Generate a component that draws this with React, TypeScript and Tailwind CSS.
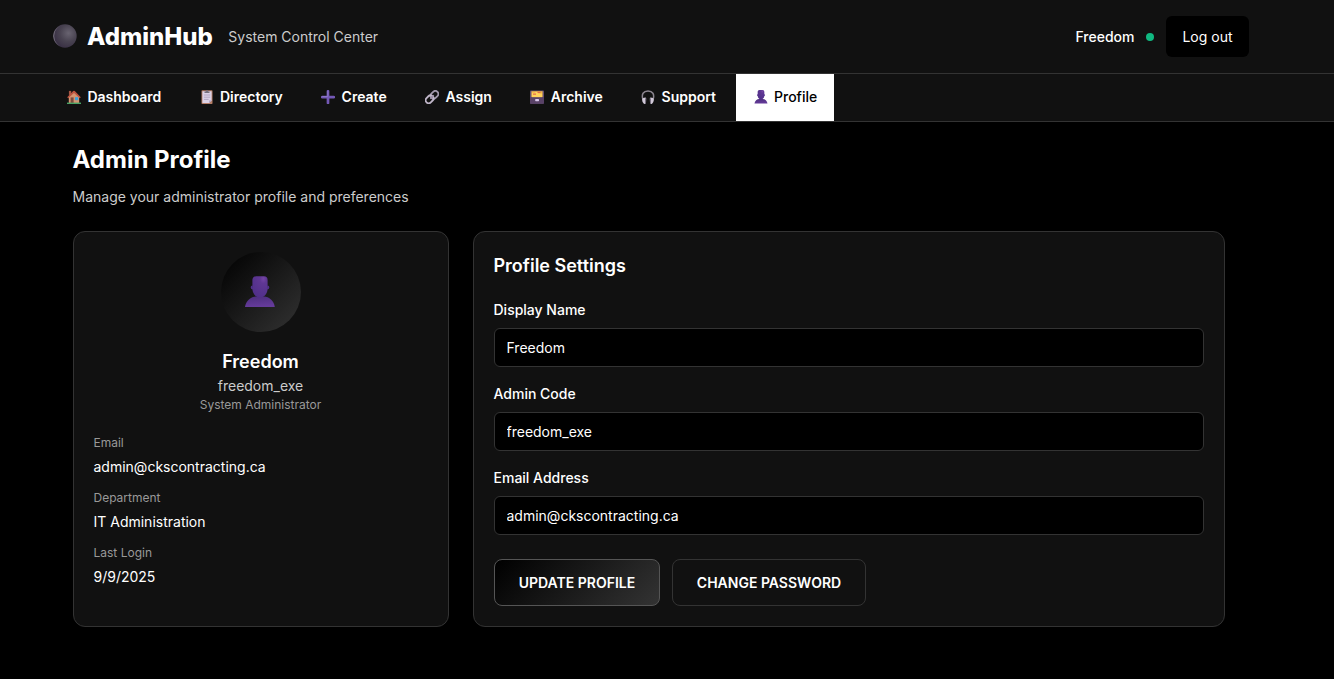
import React from "react";

type IconProps = { className?: string };

const base = "block shrink-0";

function MoonIcon() {
  return (
    <svg viewBox="0 0 24 24" className={`${base} mb-px h-6 w-6`}>
      <defs>
        <radialGradient id="moon" cx="0.65" cy="0.38" r="0.65">
          <stop offset="0" stopColor="#686370" />
          <stop offset="0.55" stopColor="#494351" />
          <stop offset="1" stopColor="#3a3145" />
        </radialGradient>
        <linearGradient id="moonEdge" x1="0" y1="0.3" x2="0.6" y2="0.3">
          <stop offset="0" stopColor="#8a8590" stopOpacity="0.8" />
          <stop offset="0.5" stopColor="#5b5563" stopOpacity="0" />
        </linearGradient>
      </defs>
      <circle cx="12" cy="12" r="11.7" fill="url(#moon)" />
      <circle cx="12" cy="12" r="11.3" fill="none" stroke="url(#moonEdge)" strokeWidth="1" />
    </svg>
  );
}

function HouseIcon({ className = "" }: IconProps) {
  return (
    <svg viewBox="0 0 14 14" className={`${base} ${className}`}>
      <path d="M1.9 0.9h2.3v4H1.9z" fill="#a65643" />
      <path d="M1.8 6.4 7 2l5.2 4.4V13H1.8z" fill="#d59572" />
      <path d="M0.2 7.2 6.2 1.1q.8-.7 1.6 0l6 6.1-1 1L7 2.9 1.2 8.2z" fill="#bd5440" />
      <path d="M3.6 7.4h3V13h-3z" fill="#7c4b3d" />
      <path d="M8 7.2h3.2v3H8z" fill="#3ba1dc" />
      <path d="M0 12.6h14V14H0z" fill="#48a265" />
    </svg>
  );
}

function ClipboardIcon({ className = "" }: IconProps) {
  return (
    <svg viewBox="0 0 14 14" className={`${base} ${className}`}>
      <rect x="1.5" y="0.2" width="11" height="13.8" rx="0.8" fill="#b47c65" />
      <path d="M2.4 1.2h9.2v9.3L9.2 13H2.4z" fill="#dcd2e6" />
      <path d="M11.6 10.5H9.2V13z" fill="#aa9bc0" />
      <path d="M4.5 1.6h1.2Q5.9 0 7 0t1.3 1.6h1.2v1.5h-5z" fill="#77717e" />
      <path d="M3.9 5h6.3M3.9 7.2h6.3M3.9 9.4h4.7" stroke="#a99bb9" strokeWidth="0.8" />
    </svg>
  );
}

function PlusIcon({ className = "" }: IconProps) {
  return (
    <svg viewBox="0 0 14 14" className={`${base} ${className}`}>
      <path d="M7 1.2v11.8M1.1 7.1h11.8" stroke="#7358b5" strokeWidth="2.7" strokeLinecap="round" />
      <path d="M6.8 1v5.5H1.2" fill="none" stroke="#9280cb" strokeWidth="0.7" />
    </svg>
  );
}

function LinkIcon({ className = "" }: IconProps) {
  return (
    <svg viewBox="0 0 14 14" className={`${base} ${className}`}>
      <g fill="none" strokeWidth="1.8">
        <rect x="5.1" y="1.9" width="8.6" height="6" rx="3" transform="rotate(-45 9.4 4.9)" stroke="#a198ab" />
        <rect x="0.3" y="6.3" width="8.6" height="6" rx="3" transform="rotate(-45 4.6 9.3)" stroke="#c0b6c9" />
        <path d="m5.2 8.8 3.6-3.6" stroke="#9d91a8" strokeWidth="1.3" />
      </g>
    </svg>
  );
}

function ArchiveIcon({ className = "" }: IconProps) {
  return (
    <svg viewBox="0 0 14 14" className={`${base} ${className}`}>
      <rect x="0" y="0.5" width="14" height="13.2" rx="0.9" fill="#645173" />
      <path d="M1.4 1.2h11.2v6H1.4z" fill="#efb64b" />
      <path d="M2 2.8h2.8l.8-.8h2.6v1.4H12v4H2z" fill="#ffd25a" />
      <path d="M3 4.2h3M7.5 2.4h3" stroke="#e56b4d" strokeWidth="1.3" />
      <path d="M0 7.3h14v5.5q0 .9-.9.9H.9q-.9 0-.9-.9z" fill="#594267" />
      <rect x="5.2" y="9" width="3.8" height="2.2" rx="0.6" fill="#dac8ec" />
    </svg>
  );
}

function HeadphonesIcon({ className = "" }: IconProps) {
  return (
    <svg viewBox="0 0 14 14" className={`${base} ${className}`}>
      <path d="M2.2 10.2C-.2 4 2.7 1 7 1s7.2 3 4.8 9.2" fill="none" stroke="#8b858f" strokeWidth="1.5" />
      <path d="M2.2 8q2.8-1.4 3 .5l-.2 4.3q-.2 1.2-1.4 1.1C1.7 13.7.1 9.1 2.2 8z" fill="#d1c9d8" />
      <path d="M11.8 8q-2.8-1.4-3 .5l.2 4.3q.2 1.2 1.4 1.1c1.9-.2 3.5-4.8 1.4-5.9z" fill="#d1c9d8" />
      <path d="M4.5 8.3v5M9.5 8.3v5" stroke="#716879" strokeWidth="0.9" />
    </svg>
  );
}

function PersonIcon({ className = "" }: IconProps) {
  return (
    <svg viewBox="0 0 30 32" className={`${base} ${className}`}>
      <defs>
        <radialGradient id="head" cx="0.72" cy="0.12" r="0.9">
          <stop offset="0" stopColor="#7545a5" />
          <stop offset="0.25" stopColor="#5f3793" />
          <stop offset="1" stopColor="#51308a" />
        </radialGradient>
        <linearGradient id="body" x1="0" y1="0" x2="0.2" y2="1">
          <stop offset="0" stopColor="#4d2e7e" />
          <stop offset="1" stopColor="#653b9a" />
        </linearGradient>
      </defs>
      <path d="M0 31C.8 24.5 6 20.8 11 20.5h8C24 20.8 29 24.5 29.8 31z" fill="url(#body)" />
      <path d="M7.6 9.6q-2-.1-1.9 1.9t2.3 2.1M22.4 9.6q2-.1 1.9 1.9t-2.3 2.1" fill="#51308a" />
      <path d="M7.4 4Q7.6.3 11.2.2H19q3.6.1 3.6 3.8v8.5c0 3.4-1.3 5.7-3.2 7.4q-4.4 3.2-8.8 0c-1.9-1.7-3.2-4-3.2-7.4z" fill="url(#head)" />
    </svg>
  );
}

const tabs = [
  { label: "Dashboard", Icon: HouseIcon },
  { label: "Directory", Icon: ClipboardIcon },
  { label: "Create", Icon: PlusIcon },
  { label: "Assign", Icon: LinkIcon },
  { label: "Archive", Icon: ArchiveIcon },
  { label: "Support", Icon: HeadphonesIcon },
];

const details = [
  ["Email", "admin@ckscontracting.ca"],
  ["Department", "IT Administration"],
  ["Last Login", "9/9/2025"],
];

const fields = [
  ["Display Name", "Freedom"],
  ["Admin Code", "freedom_exe"],
  ["Email Address", "admin@ckscontracting.ca"],
];

export default function App() {
  return (
    <div className="min-h-[679px] bg-black font-['Inter',sans-serif] text-sm text-white">
      <header className="flex h-[74px] items-center justify-between border-b border-[#333] bg-[#111] pr-[85px] pl-[52.5px]">
        <div className="flex items-center">
          <MoonIcon />
          <h1 className="ml-[10.5px] text-2xl font-extrabold">AdminHub</h1>
          <span className="ml-[15.5px] pt-px text-[#ccc]">System Control Center</span>
        </div>
        <div className="flex items-center">
          <span className="font-medium">Freedom</span>
          <span className="mr-3 ml-[11.5px] h-2 w-2 rounded-full bg-[#10b981]" />
          <button className="h-[41px] w-[83px] rounded-md bg-black">Log out</button>
        </div>
      </header>

      <nav className="flex h-12 gap-1 border-b border-[#333] bg-[#111] pl-[48.6px]">
        {tabs.map(({ label, Icon }) => (
          <a key={label} className="flex items-center pr-4 pb-px pl-[18.4px] font-semibold">
            <Icon className="mr-[6.4px] h-[14px] w-[14px]" />
            {label}
          </a>
        ))}
        <a className="flex w-[98px] items-center bg-white pb-px pl-[18px] font-medium text-black">
          <PersonIcon className="mr-[6px] h-[14px] w-[14px]" />
          Profile
        </a>
      </nav>

      <main className="w-[1225px] pt-6 pl-[73px]">
        <h2 className="-ml-[0.5px] text-2xl leading-[28px] font-bold">Admin Profile</h2>
        <p className="mt-[13px] -ml-[0.5px] leading-5 text-[#ccc]">Manage your administrator profile and preferences</p>

        <div className="mt-6 grid h-[396px] grid-cols-[376px_752px] gap-6">
          <section className="rounded-xl border border-[#333] bg-[#111] pt-5 pr-5 pl-[19.5px]">
            <div className="flex flex-col items-center">
              <div className="flex h-20 w-20 items-center justify-center rounded-full bg-[linear-gradient(135deg,#000,#333)]">
                <PersonIcon className="mr-px h-8 w-[30px]" />
              </div>
              <h3 className="mt-[18px] mr-[0.5px] text-lg leading-6 font-semibold">Freedom</h3>
              <p className="mt-[2px] mr-[0.5px] leading-5 text-[#ccc]">freedom_exe</p>
              <p className="mr-[0.5px] text-xs leading-[18px] text-[#999]">System Administrator</p>
            </div>
            <dl className="mt-5 flex flex-col gap-3">
              {details.map(([label, value]) => (
                <div key={label}>
                  <dt className="text-xs leading-[18px] text-[#999]">{label}</dt>
                  <dd className="mt-1 leading-[21px]">{value}</dd>
                </div>
              ))}
            </dl>
          </section>

          <section className="rounded-xl border border-[#333] bg-[#111] px-5 pt-5">
            <h3 className="-ml-[0.5px] text-lg leading-[27px] font-semibold">Profile Settings</h3>
            <div className="mt-5 flex flex-col gap-4">
              {fields.map(([label, value]) => (
                <label key={label} className="block">
                  <span className="-ml-[0.5px] block leading-[21px] font-medium">{label}</span>
                  <input
                    readOnly
                    value={value}
                    className="mt-2 block h-[39px] w-full rounded-md border border-[#333] bg-black pr-3 pl-[11.5px] outline-none"
                  />
                </label>
              ))}
            </div>
            <div className="mt-6 flex gap-3">
              <button className="h-[47px] w-[166px] rounded-lg border border-[#555] bg-[linear-gradient(135deg,#000,#333)] font-semibold">
                UPDATE PROFILE
              </button>
              <button className="h-[47px] w-[194px] rounded-lg border border-[#333] font-semibold">
                CHANGE PASSWORD
              </button>
            </div>
          </section>
        </div>
      </main>
    </div>
  );
}
